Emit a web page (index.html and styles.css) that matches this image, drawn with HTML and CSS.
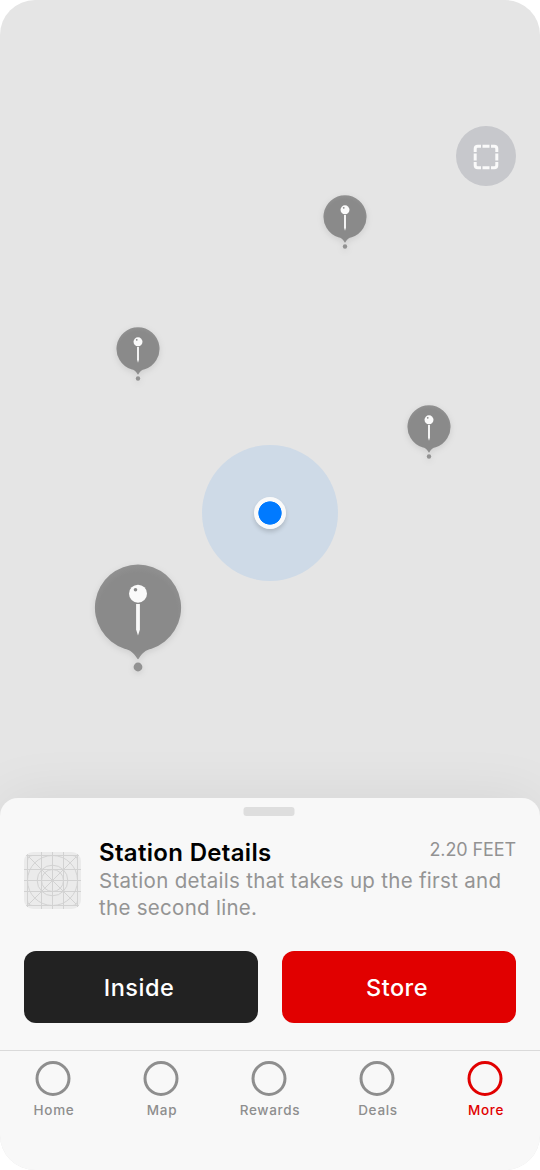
FILE: index.html
```html
<!DOCTYPE html>
<html lang="en">
<head>
<meta charset="utf-8">
<title>Station Details</title>
<link rel="stylesheet" href="styles.css">
</head>
<body>
<svg class="defs" width="0" height="0" aria-hidden="true">
  <defs>
    <radialGradient id="pin-fill" gradientUnits="userSpaceOnUse" cx="44" cy="48" r="49">
      <stop offset=".8" stop-color="#8a8a8a"/><stop offset="1" stop-color="#929292"/>
    </radialGradient>
  </defs>
  <symbol id="pin" viewBox="0 0 88 110">
    <path d="M44 .5A43.200 43.200 0 0 0 30.500 84.700C36 86 39.800 88.500 43.200 94.500Q44 96 44.800 94.500C48.200 88.500 52 86 57.500 84.700A43.200 43.200 0 0 0 44 .5Z" fill="url(#pin-fill)"/>
    <circle cx="44" cy="103" r="4.400" fill="#929292"/>
    <circle cx="44" cy="29.700" r="9" fill="#fafafa"/>
    <circle cx="41.500" cy="25.700" r="1.800" fill="#8a8a8a"/>
    <path d="M42.100 40h3.800v25.500L44 71.500l-1.900-6Z" fill="#f8f8f8"/>
  </symbol>
</svg>
<div class="screen">
  <main class="map">
    <button class="locate" aria-label="Select area">
      <svg width="26" height="26" viewBox="0 0 26 26" fill="none" stroke="#fafafa" stroke-width="3">
        <path d="M2.200 8V4.700a2.500 2.500 0 0 1 2.500-2.500H8M18 2.200h3.300a2.500 2.500 0 0 1 2.500 2.500V8M23.800 18v3.300a2.500 2.500 0 0 1-2.500 2.500H18M8 23.800H4.700a2.500 2.500 0 0 1-2.500-2.500V18M9.500 2.200h7M9.500 23.800h7M2.200 9.500v7M23.800 9.500v7"/>
      </svg>
    </button>
    <svg class="pin pin-a"><use href="#pin"/></svg>
    <svg class="pin pin-b"><use href="#pin"/></svg>
    <svg class="pin pin-c"><use href="#pin"/></svg>
    <svg class="pin pin-large"><use href="#pin"/></svg>
    <div class="position"><div class="position-dot"></div></div>
  </main>
  <section class="sheet">
    <div class="handle"></div>
    <div class="station">
      <svg class="thumb" width="57" height="57" viewBox="0 0 57 57" fill="none" stroke="#d2d2d2">
        <rect width="57" height="57" fill="#ebebeb" stroke="none"/>
        <rect x="3.500" y="3.500" width="50" height="50" rx="5"/>
        <path d="M17.500 0v57M28.500 0v57M39.500 0v57M0 17.500h57M0 28.500h57M0 39.500h57M3.500 0v57M53.500 0v57M0 3.500h57M0 53.500h57M4.500 4.500l48 48M52.500 4.500l-48 48"/>
        <circle cx="28.500" cy="28.500" r="25"/><circle cx="28.500" cy="28.500" r="15.300"/><circle cx="28.500" cy="28.500" r="11"/>
      </svg>
      <div class="info">
        <div class="heading"><h1 class="title">Station Details</h1><span class="distance">2.20 FEET</span></div>
        <p class="description">Station details that takes up the first and<br>the second line.</p>
      </div>
    </div>
    <div class="actions">
      <button class="action">Inside</button>
      <button class="action action-primary">Store</button>
    </div>
  </section>
  <nav class="tabs">
    <a class="tab"><i class="ring"></i><span>Home</span></a>
    <a class="tab"><i class="ring"></i><span>Map</span></a>
    <a class="tab"><i class="ring"></i><span>Rewards</span></a>
    <a class="tab"><i class="ring"></i><span>Deals</span></a>
    <a class="tab tab-active"><i class="ring"></i><span>More</span></a>
  </nav>
</div>
</body>
</html>
```
FILE: styles.css
```css
* { box-sizing: border-box; }
body { margin: 0; background: #fff; font-family: Inter, "Liberation Sans", sans-serif; }
button { border: 0; padding: 0; font: inherit; }
.defs { position: absolute; }
.screen { width: 540px; height: 1170px; display: flex; flex-direction: column; overflow: hidden; border-radius: 35px; background: #e5e5e5; }
.map { position: relative; flex: none; height: 798px; }
.locate { position: absolute; left: 456px; top: 126px; width: 60px; height: 60px; border-radius: 50%; background: #c7c8cc; display: flex; align-items: center; justify-content: center; padding-top: 2px; }
.pin { position: absolute; width: 44px; height: 55px; overflow: visible; filter: drop-shadow(0 2px 3px rgba(0,0,0,.1)); }
.pin-a { left: 323px; top: 195px; }
.pin-b { left: 116px; top: 327px; }
.pin-c { left: 407px; top: 405px; }
.pin-large { left: 94px; top: 564px; width: 88px; height: 110px; }
.position { position: absolute; left: 202px; top: 445px; width: 136px; height: 136px; border-radius: 50%; background: #cedae7; display: flex; align-items: center; justify-content: center; }
.position-dot { width: 32px; height: 32px; border-radius: 50%; background: radial-gradient(circle, #007aff 11.300px, #fafafa 12px); box-shadow: 0 3px 4px rgba(0,0,0,.15); }
.sheet { position: relative; flex: none; height: 252px; padding: 9px 24px 0; border-radius: 18px 18px 0 0; background: #f8f8f8; box-shadow: 0 0 60px rgba(0,0,0,.07); }
.handle { width: 51px; height: 9px; margin: 0 auto; border-radius: 3px; background: #dedede; transform: translateX(-1.500px); }
.station { display: flex; gap: 18px; height: 135px; padding-top: 22px; }
.thumb { flex: none; margin-top: 14px; border-radius: 9px; }
.info { flex: 1; }
.heading { display: flex; justify-content: space-between; align-items: flex-start; height: 30px; }
.title { margin: 0; font-size: 24px; line-height: 30px; font-weight: 600; letter-spacing: .32px; color: #000; white-space: nowrap; }
.distance { font-size: 18px; line-height: 23px; letter-spacing: -.100px; color: #929292; white-space: nowrap; }
.description { margin: -1px 0 0; font-size: 20.500px; line-height: 27px; letter-spacing: .29px; color: #949494; white-space: nowrap; }
.actions { display: flex; gap: 24px; }
.action { flex: 1; height: 72px; padding: 0 4px 0 0; border-radius: 12px; background: #222; color: #fff; font-size: 23.500px; font-weight: 500; letter-spacing: .5px; }
.action-primary { background: #e10000; }
.tabs { position: relative; flex: 1; display: flex; border-top: 1px solid #dadada; background: #f8f8f8; }
.tab { flex: 1; display: flex; flex-direction: column; align-items: center; padding-top: 10px; color: #8e8e8e; font-size: 13.500px; font-weight: 500; line-height: 18px; letter-spacing: .7px; }
.ring { width: 35px; height: 35px; margin-bottom: 5px; border: 3px solid currentColor; border-radius: 50%; transform: translateX(-1.500px); }
.tab-active { color: #e10000; }
```
